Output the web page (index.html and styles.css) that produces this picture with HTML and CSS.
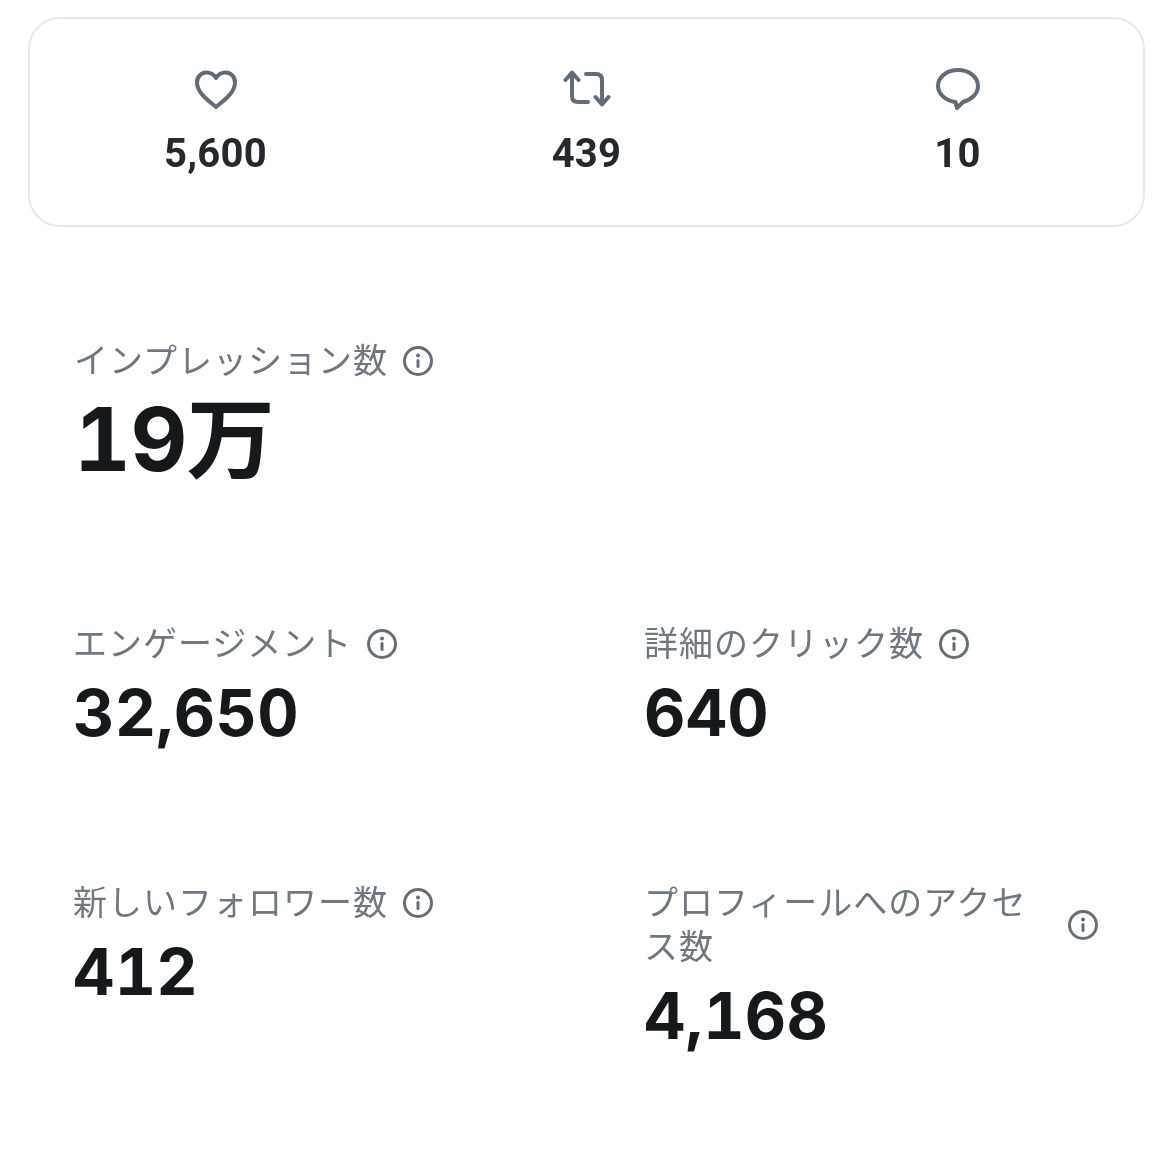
FILE: index.html
```html
<!DOCTYPE html>
<html lang="ja">
<head>
<meta charset="utf-8">
<title>ポストアナリティクス</title>
<link rel="stylesheet" href="styles.css">
</head>
<body>
<main class="page">
  <section class="card">
    <div class="stat">
      <svg class="stat-icon" viewBox="0 0 48 48"><path d="M24 40 C17 34 5 26 5 15.500 C5 9.500 9.500 5.500 14.500 5.500 C18.500 5.500 22 7.500 24 11 C26 7.500 29.500 5.500 33.500 5.500 C38.500 5.500 43 9.500 43 15.500 C43 26 31 34 24 40 Z"/></svg>
      <span class="stat-num">5,600</span>
    </div>
    <div class="stat">
      <svg class="stat-icon" viewBox="0 0 48 48"><path d="M9 7 V29 Q9 35 15 35 H25"/><path d="M2.500 13 L9 5.500 L15.500 13"/><path d="M39 36 V13 Q39 7 33 7 H23"/><path d="M32.500 30 L39 37.500 L45.500 30"/></svg>
      <span class="stat-num">439</span>
    </div>
    <div class="stat">
      <svg class="stat-icon" viewBox="0 0 48 48"><path d="M24 3 C35 3 44 10 44 19 C44 27 37 33 29 35 L23 41 L21.500 35 C12 34 4 27 4 19 C4 10 13 3 24 3 Z"/></svg>
      <span class="stat-num">10</span>
    </div>
  </section>

  <section class="metric metric-main">
    <div class="label-row">
      <span class="label">インプレッション数</span>
      <svg class="info" viewBox="0 0 32 32"><circle cx="16" cy="16" r="13.500"/><circle class="dot" cx="16" cy="10.500" r="2"/><path d="M16 15.500 V21.500"/></svg>
    </div>
    <div class="value value-large">19万</div>
  </section>

  <section class="metric-grid">
    <div class="metric">
      <div class="label-row">
        <span class="label">エンゲージメント</span>
        <svg class="info" viewBox="0 0 32 32"><circle cx="16" cy="16" r="13.500"/><circle class="dot" cx="16" cy="10.500" r="2"/><path d="M16 15.500 V21.500"/></svg>
      </div>
      <div class="value">32,650</div>
    </div>
    <div class="metric">
      <div class="label-row">
        <span class="label">詳細のクリック数</span>
        <svg class="info" viewBox="0 0 32 32"><circle cx="16" cy="16" r="13.500"/><circle class="dot" cx="16" cy="10.500" r="2"/><path d="M16 15.500 V21.500"/></svg>
      </div>
      <div class="value">640</div>
    </div>
    <div class="metric">
      <div class="label-row">
        <span class="label">新しいフォロワー数</span>
        <svg class="info" viewBox="0 0 32 32"><circle cx="16" cy="16" r="13.500"/><circle class="dot" cx="16" cy="10.500" r="2"/><path d="M16 15.500 V21.500"/></svg>
      </div>
      <div class="value">412</div>
    </div>
    <div class="metric">
      <div class="label-row label-row-wrap">
        <span class="label">プロフィールへのアクセス数</span>
        <svg class="info" viewBox="0 0 32 32"><circle cx="16" cy="16" r="13.500"/><circle class="dot" cx="16" cy="10.500" r="2"/><path d="M16 15.500 V21.500"/></svg>
      </div>
      <div class="value">4,168</div>
    </div>
  </section>
</main>
</body>
</html>
```
FILE: styles.css
```css
* { box-sizing: border-box; }

html, body {
  margin: 0;
  background: #fff;
}

.page {
  width: 1170px;
  height: 1176px;
  padding: 17px 25px 0 28px;
  overflow: hidden;
  font-family: Inter, "Noto Sans CJK JP", sans-serif;
  filter: blur(0.7px);
}

.card {
  display: grid;
  grid-template-columns: repeat(3, 1fr);
  height: 210px;
  border: 2px solid #e6e9eb;
  border-radius: 32px;
}

.stat {
  display: flex;
  flex-direction: column;
  align-items: center;
  padding-top: 48px;
}

.stat-icon {
  width: 48px;
  height: 48px;
  fill: none;
  stroke: #626c74;
  stroke-width: 4;
  stroke-linecap: round;
  stroke-linejoin: round;
}

.stat-num {
  margin-top: 17px;
  font-family: Roboto, sans-serif;
  font-size: 40px;
  line-height: 44px;
  font-weight: 700;
  letter-spacing: 0.3px;
  color: #24292d;
}

.metric { min-width: 0; }

.metric-main {
  margin: 112px 0 0 46px;
}

.metric-grid {
  display: grid;
  grid-template-columns: 571px 455px;
  grid-template-rows: 259px auto;
  margin: 131px 0 0 45px;
}

.label-row {
  display: flex;
  align-items: center;
  gap: 14px;
}

.label {
  font-size: 34px;
  line-height: 44px;
  letter-spacing: 1px;
  color: #6f7880;
}

.label-row-wrap { justify-content: space-between; }

.label-row-wrap .label { width: 407px; }

.info {
  flex: none;
  width: 32px;
  height: 32px;
  fill: none;
  stroke: #666f76;
  stroke-width: 3;
  stroke-linecap: round;
}

.info .dot {
  fill: #666f76;
  stroke: none;
}

.value {
  margin-top: 9px;
  font-size: 64px;
  line-height: 76px;
  font-weight: 700;
  font-variant-numeric: tabular-nums;
  letter-spacing: 0.3px;
  color: #16191c;
}

.value-large {
  margin-top: 4px;
  font-size: 88px;
  line-height: 104px;
  letter-spacing: -0.5px;
}
```
